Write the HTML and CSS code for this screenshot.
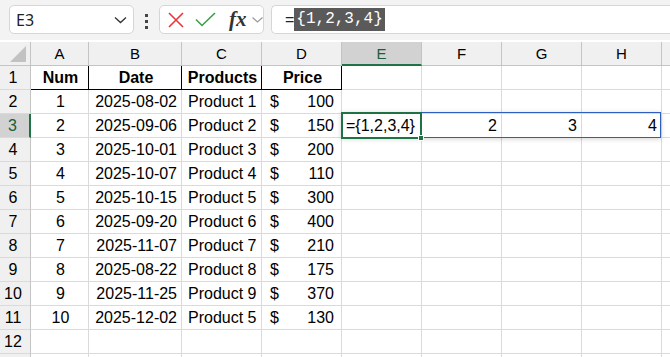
FILE: index.html
```html
<!DOCTYPE html>
<html lang="en">
<head>
  <meta charset="UTF-8" />
  <title>Book1 - E3</title>
  <link rel="stylesheet" href="styles.css">
</head>
<body>
<div class="toolbar">
  <div class="namebox">
    <span>E3</span>
    <svg class="chev" width="13" height="8" viewBox="0 0 13 8"><path d="M1 1.5 L6.5 6.5 L12 1.5" fill="none" stroke="#333" stroke-width="1.3"/></svg>
  </div>
  <div class="dots"><i></i><i></i><i></i></div>
  <div class="fnbox">
    <svg width="16" height="16" viewBox="0 0 16 16"><path d="M1 1 L15 15 M15 1 L1 15" stroke="#e8373c" stroke-width="1.6"/></svg>
    <svg width="21" height="15" viewBox="0 0 21 15"><path d="M1 7.5 L7 13.5 L20 1" fill="none" stroke="#3aa048" stroke-width="1.6"/></svg>
    <span class="fx">fx</span>
    <svg width="11" height="6" viewBox="0 0 11 6"><path d="M0.5 0.5 L5.5 5 L10.5 0.5" fill="none" stroke="#9a9a9a" stroke-width="1.2"/></svg>
  </div>
  <div class="formula">
    <span class="eq">=</span><span class="hl">{1,2,3,4}</span>
  </div>
</div>

<div class="sheet">
  <div class="row head">
    <div class="corner"><span class="tri"></span></div>
    <div class="ch">A</div><div class="ch">B</div><div class="ch">C</div><div class="ch">D</div>
    <div class="ch sel">E</div><div class="ch">F</div><div class="ch">G</div><div class="ch">H</div><div class="ch last"></div>
  </div>
  <div class="row">
    <div class="rh">1</div>
    <div class="c b mid title">Num</div><div class="c b mid title">Date</div><div class="c b mid title">Products</div><div class="c b mid title">Price</div>
    <div class="c"></div><div class="c"></div><div class="c"></div><div class="c"></div><div class="c"></div>
  </div>
  <div id="rows"></div>
</div>

<div class="spill"></div>
<div class="active">={1,2,3,4}<span class="handle"></span></div>

<script>
  const data = [
    [1, "2025-08-02", "Product 1", 100],
    [2, "2025-09-06", "Product 2", 150],
    [3, "2025-10-01", "Product 3", 200],
    [4, "2025-10-07", "Product 4", 110],
    [5, "2025-10-15", "Product 5", 300],
    [6, "2025-09-20", "Product 6", 400],
    [7, "2025-11-07", "Product 7", 210],
    [8, "2025-08-22", "Product 8", 175],
    [9, "2025-11-25", "Product 9", 370],
    [10, "2025-12-02", "Product 5", 130]
  ];
  const rows = document.getElementById("rows");
  let html = "";
  data.forEach((d, i) => {
    const n = i + 2;
    html += `<div class="row">
      <div class="rh${n === 3 ? " sel" : ""}">${n}</div>
      <div class="c mid">${d[0]}</div>
      <div class="c right">${d[1]}</div>
      <div class="c">${d[2]}</div>
      <div class="c money"><span>$</span><span>${d[3]}</span></div>
      <div class="c"></div>
      <div class="c right">${n === 3 ? 2 : ""}</div>
      <div class="c right">${n === 3 ? 3 : ""}</div>
      <div class="c right">${n === 3 ? 4 : ""}</div>
      <div class="c"></div>
    </div>`;
  });
  html += `<div class="row"><div class="rh">12</div>` + '<div class="c"></div>'.repeat(9) + `</div>`;
  html += `<div class="row"><div class="rh"></div>` + '<div class="c"></div>'.repeat(9) + `</div>`;
  rows.innerHTML = html;
</script>
</body>
</html>
```

FILE: styles.css
```css
* { box-sizing: border-box; }
body {
  margin: 0;
  background: #fff;
  font-family: "Liberation Sans", Arial, sans-serif;
  color: #000;
  overflow: hidden;
}
.toolbar {
  height: 40px;
  background: #f3f3f3;
  display: flex;
  align-items: flex-start;
  padding: 5px 0 0 9px;
  margin-bottom: 2px;
}
.namebox {
  width: 125px;
  height: 29px;
  background: #fff;
  border: 1px solid #d6d6d6;
  border-radius: 5px;
  display: flex;
  align-items: center;
  justify-content: space-between;
  padding: 0 6px 0 6px;
  font-family: "Noto Sans", sans-serif;
  font-size: 16px;
  color: #222;
}
.dots {
  width: 25px;
  display: flex;
  flex-direction: column;
  align-items: center;
  gap: 3px;
  padding-top: 9px;
}
.dots i {
  width: 3px;
  height: 3px;
  background: #444;
}
.fnbox {
  width: 105px;
  height: 29px;
  background: #fff;
  border: 1px solid #d6d6d6;
  border-radius: 5px;
  display: flex;
  align-items: center;
  gap: 11px;
  padding-left: 8px;
}
.fnbox .fx {
  font-family: "Liberation Serif", serif;
  font-style: italic;
  font-weight: bold;
  font-size: 21px;
  color: #333;
  margin-left: 2px;
  margin-right: -6px;
  line-height: 1;
}
.formula {
  flex: 1;
  margin-left: 7px;
  height: 29px;
  background: #fff;
  border: 1px solid #d6d6d6;
  border-right: none;
  border-radius: 5px 0 0 5px;
  display: flex;
  align-items: center;
  padding-left: 13px;
  font-size: 16px;
}
.formula .eq { color: #222; }
.formula .hl {
  background: #5a5a5a;
  color: #fff;
  font-family: "Liberation Mono", monospace;
  font-size: 16px;
  line-height: 23px;
  padding: 0 2px;
}
.sheet {
  font-size: 16px;
}
.row {
  display: grid;
  grid-template-columns: 31px 58px 93px 80px 80px 80px 80px 80px 80px 1fr;
  height: 24px;
}
.row > div {
  border-right: 1px solid #dadada;
  border-bottom: 1px solid #dadada;
  display: flex;
  align-items: center;
  white-space: nowrap;
  overflow: hidden;
}
.head > div {
  background: #f0f0f0;
  border-right-color: #c4c4c4;
  border-bottom-color: #c4c4c4;
  justify-content: center;
  font-size: 15px;
}
.head .sel {
  background: #d2d2d2;
  color: #1a5e36;
  border-bottom: 2px solid #1f7244;
}
.head .last { border-right: none; }
.corner { position: relative; }
.tri {
  position: absolute;
  right: 4px;
  bottom: 3px;
  width: 0;
  height: 0;
  border-left: 16px solid transparent;
  border-bottom: 16px solid #c2c2c2;
}
.rh {
  background: #f0f0f0;
  border-right-color: #c4c4c4 !important;
  border-bottom-color: #dadada;
  justify-content: center;
  padding-right: 4px;
}
.rh.sel {
  background: #d2d2d2;
  color: #1a5e36;
  border-right: 2px solid #1f7244 !important;
}
.c { padding: 0 4px 0 6px; }
.mid { justify-content: center; }
.right { justify-content: flex-end; }
.b { font-weight: bold; }
.title {
  border-right-color: #000 !important;
  border-bottom-color: #000 !important;
}
.money {
  justify-content: space-between;
  padding: 0 7px 0 8px;
}
.spill {
  position: absolute;
  left: 341px;
  top: 112px;
  width: 320px;
  height: 26px;
  border: 1px solid #2d5fbe;
  box-shadow: 0 1px 5px rgba(0, 0, 0, 0.18);
}
.active {
  position: absolute;
  left: 341px;
  top: 112px;
  width: 81px;
  height: 27px;
  border: 2px solid #1f7244;
  font-size: 16px;
  line-height: 23px;
  padding-left: 3px;
  white-space: nowrap;
}
.handle {
  position: absolute;
  right: -4px;
  bottom: -4px;
  width: 6px;
  height: 6px;
  background: #1f7244;
  border: 1px solid #fff;
}
```
